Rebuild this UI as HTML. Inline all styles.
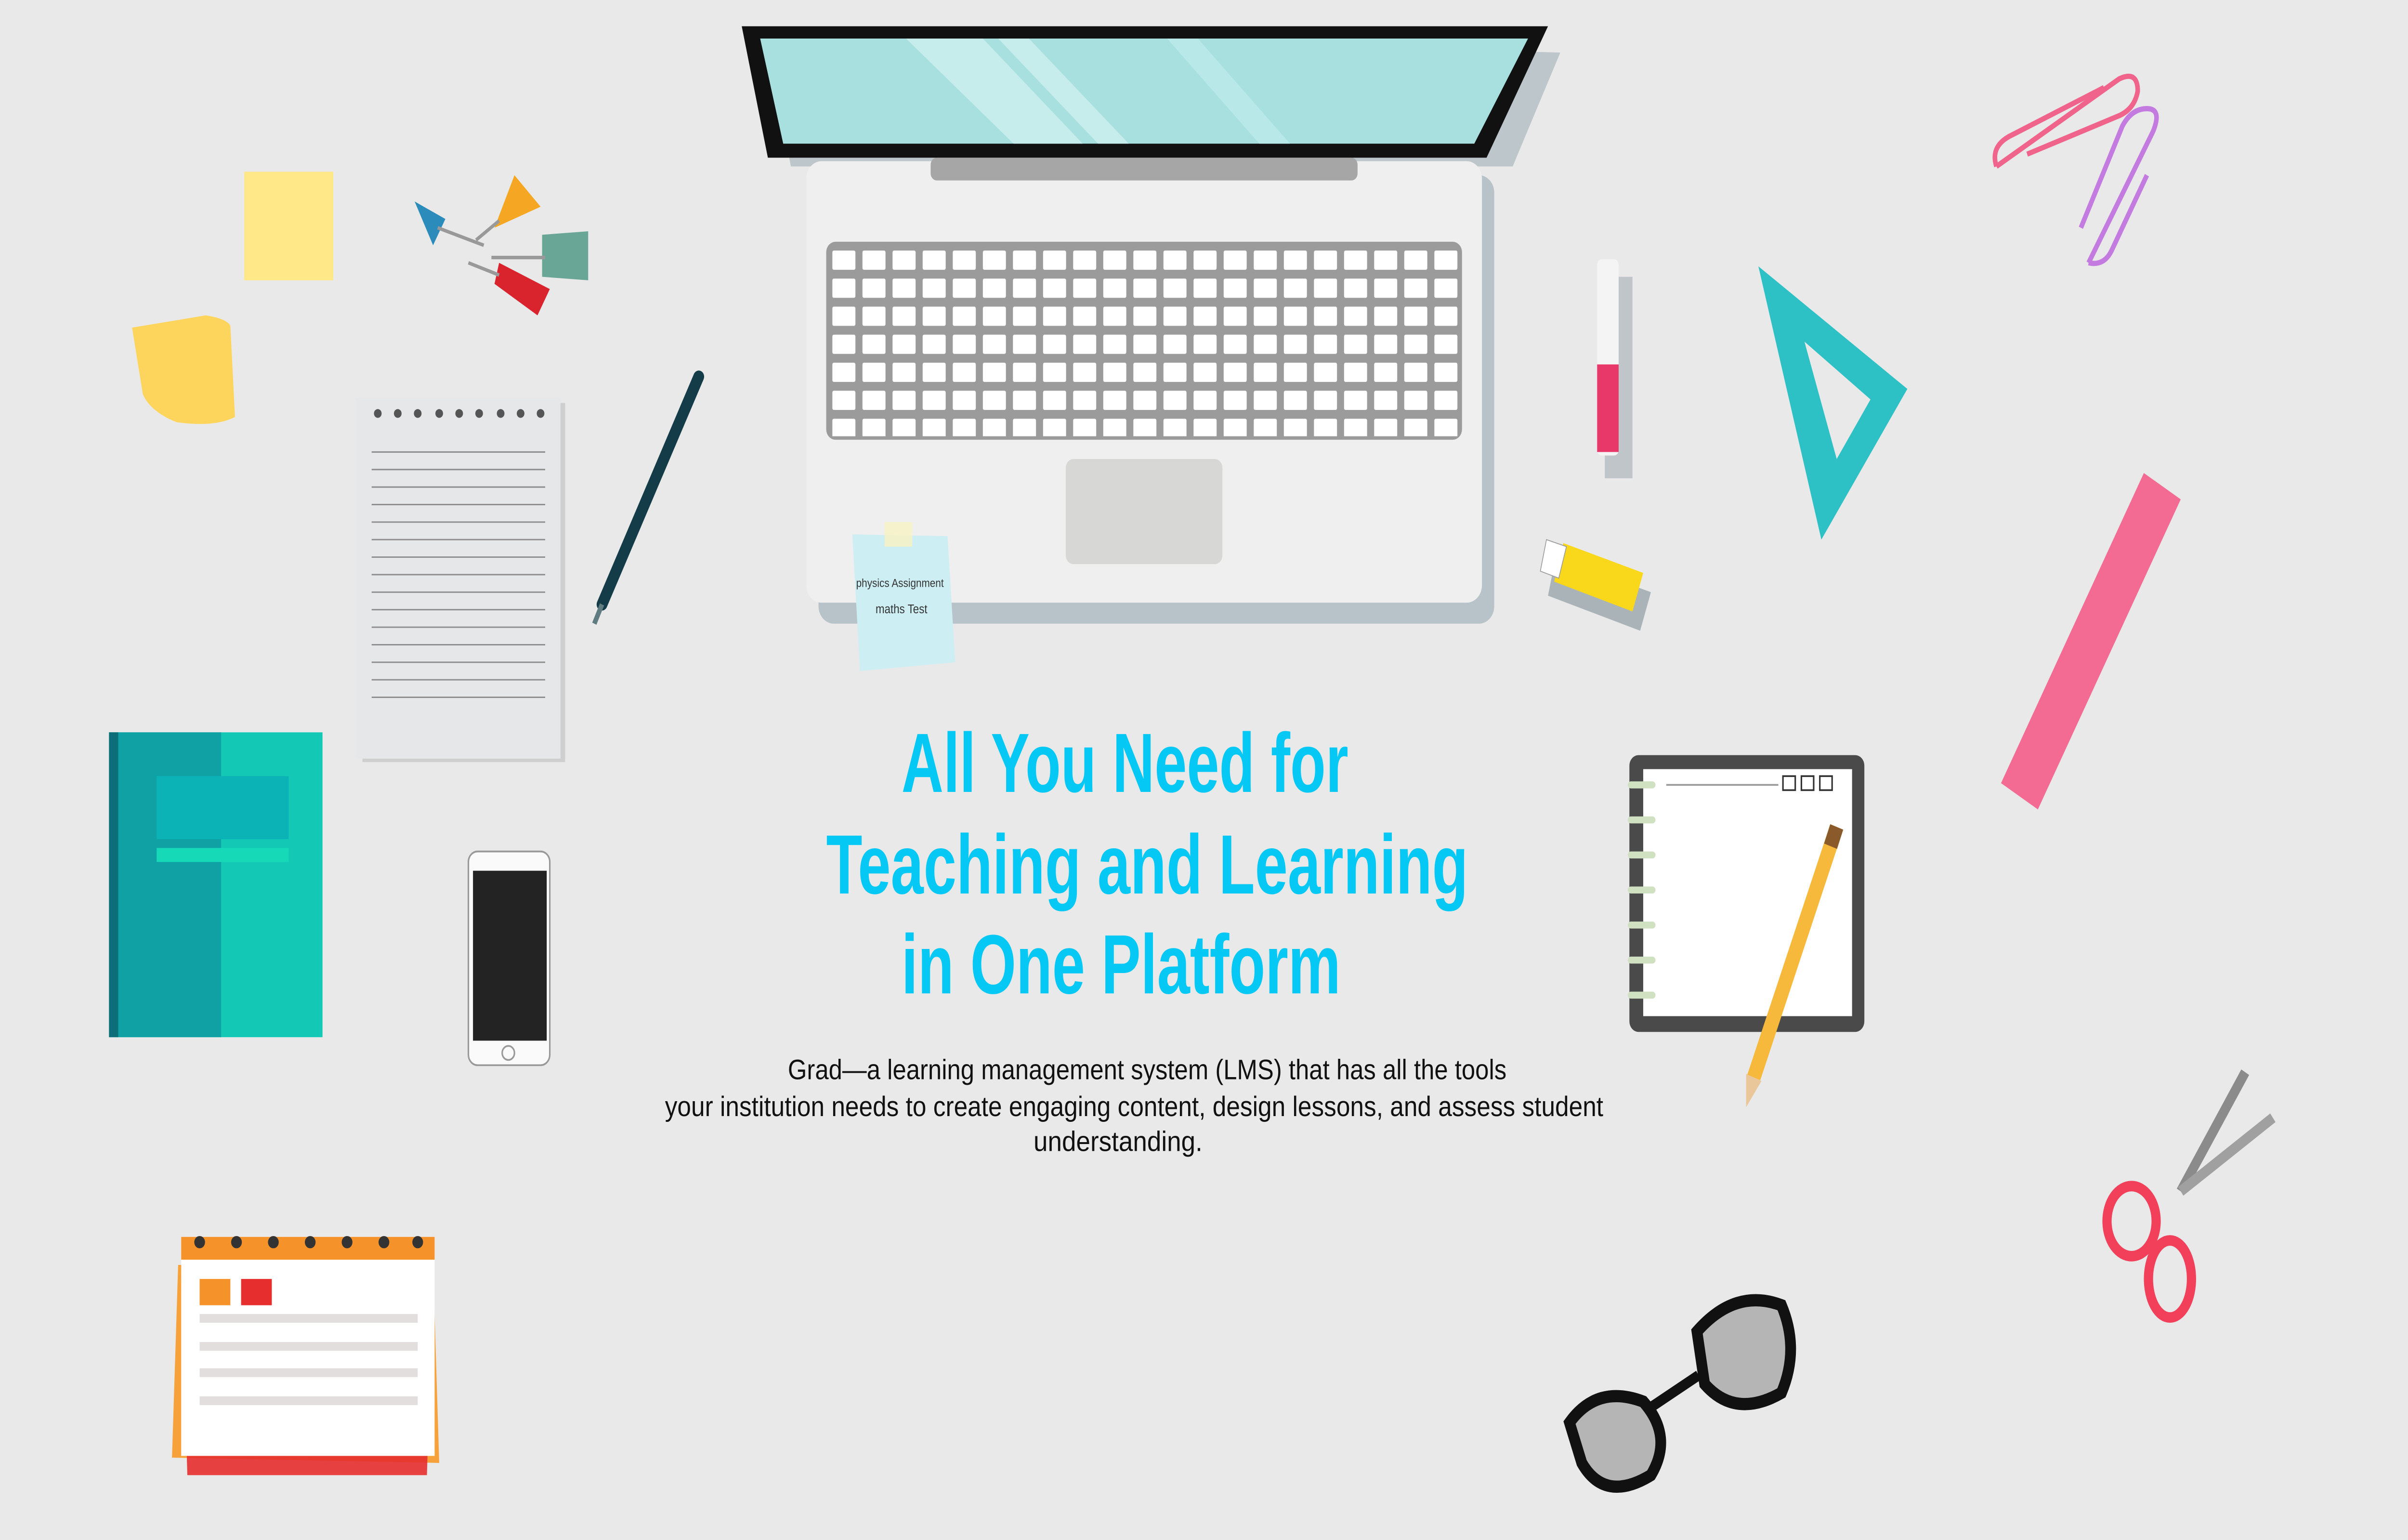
<!DOCTYPE html>
<html><head><meta charset="utf-8"><style>
html,body{margin:0;padding:0;background:#e9e9e9;width:100%;height:100%;overflow:hidden;}
svg{display:block;width:100vw;height:100vh;}
</style></head><body>
<svg viewBox="0 0 1568 879" preserveAspectRatio="none" xmlns="http://www.w3.org/2000/svg">
<defs>
<pattern id="keys" x="540" y="141" width="19.6" height="16" patternUnits="userSpaceOnUse">
<rect x="2" y="2" width="15" height="11" fill="#fff" rx="1"/>
</pattern>
</defs>
<rect width="1568" height="879" fill="#e9e9e9"/>

<!-- laptop -->
<path d="M498 18 L1016 30 L985 95 L515 95 Z" fill="#bcc6cb"/>
<path d="M483 15 L1008 15 L968 90 L500 90 Z" fill="#111"/>
<path d="M495 22 L995 22 L960 82 L510 82 Z" fill="#a8e0e0"/>
<path d="M590 22 L640 22 L705 82 L660 82 Z" fill="#c6ecec"/>
<path d="M650 22 L670 22 L735 82 L715 82 Z" fill="#c6ecec"/>
<path d="M760 22 L780 22 L840 82 L820 82 Z" fill="#b8e8e8"/>
<rect x="533" y="100" width="440" height="256" rx="10" fill="#b7c3c9"/>
<rect x="525" y="92" width="440" height="252" rx="10" fill="#efefef"/>
<rect x="606" y="90" width="278" height="13" rx="4" fill="#a6a6a6"/>
<rect x="538" y="138" width="414" height="113" rx="6" fill="#9b9b9b"/>
<rect x="540" y="141" width="410" height="108" fill="url(#keys)"/>
<rect x="694" y="262" width="102" height="60" rx="5" fill="#d7d7d5"/>
<path d="M555 305 L617 306 L622 378 L560 383 Z" fill="#cdeef3"/>
<rect x="576" y="298" width="18" height="14" fill="#f5f2c8" opacity="0.9"/>
<text x="586" y="335" font-family="Liberation Sans Narrow, Liberation Sans, sans-serif" font-size="6.5" text-anchor="middle" fill="#333">physics Assignment</text>
<text x="587" y="350" font-family="Liberation Sans Narrow, Liberation Sans, sans-serif" font-size="7" text-anchor="middle" fill="#333">maths Test</text>

<!-- sticky notes -->
<rect x="159" y="98" width="58" height="62" fill="#fee888"/>
<path d="M86 187 L134 180 Q148 182 150 186 L153 238 Q140 244 115 241 Q98 235 93 225 Z" fill="#fdd55c"/>
<!-- pushpins -->
<path d="M270 115 L290 125 L282 140 Z" fill="#2b8bbb"/><line x1="285" y1="130" x2="315" y2="140" stroke="#999" stroke-width="2"/>
<path d="M335 100 L352 118 L322 130 Z" fill="#f5a623"/><line x1="325" y1="126" x2="310" y2="137" stroke="#999" stroke-width="2"/>
<path d="M353 134 L383 132 L383 160 L353 158 Z" fill="#6aa695"/><line x1="320" y1="147" x2="355" y2="147" stroke="#999" stroke-width="2"/>
<path d="M325 150 L358 165 L350 180 L322 162 Z" fill="#d9232d"/><line x1="305" y1="150" x2="325" y2="157" stroke="#999" stroke-width="2"/>

<!-- notepad -->
<rect x="236" y="230" width="132" height="205" fill="#cfcfcf"/>
<rect x="232" y="227" width="133" height="206" fill="#e6e7e8"/>
<g stroke="#8d8d8d" stroke-width="0.8">
<line x1="242" y1="258" x2="355" y2="258"/><line x1="242" y1="268" x2="355" y2="268"/><line x1="242" y1="278" x2="355" y2="278"/><line x1="242" y1="288" x2="355" y2="288"/><line x1="242" y1="298" x2="355" y2="298"/><line x1="242" y1="308" x2="355" y2="308"/><line x1="242" y1="318" x2="355" y2="318"/><line x1="242" y1="328" x2="355" y2="328"/><line x1="242" y1="338" x2="355" y2="338"/><line x1="242" y1="348" x2="355" y2="348"/><line x1="242" y1="358" x2="355" y2="358"/><line x1="242" y1="368" x2="355" y2="368"/><line x1="242" y1="378" x2="355" y2="378"/><line x1="242" y1="388" x2="355" y2="388"/><line x1="242" y1="398" x2="355" y2="398"/>
</g>
<g fill="#555"><circle cx="246" cy="236" r="2.5"/><circle cx="259" cy="236" r="2.5"/><circle cx="272" cy="236" r="2.5"/><circle cx="286" cy="236" r="2.5"/><circle cx="299" cy="236" r="2.5"/><circle cx="312" cy="236" r="2.5"/><circle cx="326" cy="236" r="2.5"/><circle cx="339" cy="236" r="2.5"/><circle cx="352" cy="236" r="2.5"/></g>
<line x1="455" y1="215" x2="392" y2="345" stroke="#143c48" stroke-width="7" stroke-linecap="round"/>
<line x1="392" y1="345" x2="387" y2="356" stroke="#5f7d80" stroke-width="3"/>

<!-- teal notebook -->
<rect x="71" y="418" width="139" height="174" fill="#13c9b6"/>
<rect x="71" y="418" width="73" height="174" fill="#10a1a4"/>
<rect x="71" y="418" width="6" height="174" fill="#0b6e78"/>
<rect x="102" y="443" width="86" height="36" fill="#0cb3b6"/>
<rect x="102" y="484" width="86" height="8" fill="#16d9b8"/>
<!-- phone -->
<rect x="305" y="486" width="53" height="122" rx="6" fill="#fafafa" stroke="#999" stroke-width="1"/>
<rect x="308" y="497" width="48" height="97" fill="#232323"/>
<circle cx="331" cy="601" r="4" fill="none" stroke="#999"/>
<!-- calendar -->
<path d="M116 722 L282 722 L286 835 L112 832 Z" fill="#f6a13a"/>
<path d="M118 722 L282 722 L278 842 L122 842 Z" fill="#e62e2e" opacity="0.9"/>
<rect x="118" y="706" width="165" height="125" fill="#fff"/>
<rect x="118" y="706" width="165" height="13" fill="#f6922a"/>
<rect x="130" y="730" width="20" height="15" fill="#f6922a"/>
<rect x="157" y="730" width="20" height="15" fill="#e62e2e"/>
<g fill="#e3dede"><rect x="130" y="750" width="142" height="5"/><rect x="130" y="766" width="142" height="5"/><rect x="130" y="781" width="142" height="5"/><rect x="130" y="797" width="142" height="5"/></g>
<g fill="#333"><circle cx="130" cy="709" r="3.5"/><circle cx="154" cy="709" r="3.5"/><circle cx="178" cy="709" r="3.5"/><circle cx="202" cy="709" r="3.5"/><circle cx="226" cy="709" r="3.5"/><circle cx="250" cy="709" r="3.5"/><circle cx="272" cy="709" r="3.5"/></g>

<!-- marker -->
<rect x="1045" y="158" width="18" height="115" fill="#bfc5c9"/>
<rect x="1040" y="148" width="14" height="112" rx="3" fill="#f4f4f4"/>
<rect x="1040" y="208" width="14" height="50" fill="#e8386a"/>
<!-- usb -->
<path d="M1013 318 L1075 338 L1068 360 L1008 340 Z" fill="#a9b3b8"/>
<path d="M1018 310 L1070 327 L1063 349 L1012 332 Z" fill="#f9d81c"/>
<path d="M1007 308 L1020 312 L1015 330 L1003 326 Z" fill="#fff" stroke="#999" stroke-width="0.5"/>
<!-- triangle ruler -->
<path d="M1145 152 L1242 222 L1186 308 Z M1175 195 L1196 262 L1218 228 Z" fill="#2dc1c6" fill-rule="evenodd"/>
<!-- paperclips -->
<path d="M1300 95 L1380 45 Q1392 40 1392 52 Q1390 62 1380 66 L1320 88" fill="none" stroke="#f0648c" stroke-width="3"/>
<path d="M1300 95 Q1296 84 1308 78 L1370 50" fill="none" stroke="#f0648c" stroke-width="3"/>
<path d="M1360 150 L1402 75 Q1408 62 1398 62 Q1388 62 1382 72 L1355 130" fill="none" stroke="#c47be0" stroke-width="3"/>
<path d="M1360 150 Q1370 152 1375 143 L1398 100" fill="none" stroke="#c47be0" stroke-width="3"/>
<!-- pink ruler -->
<path d="M1396 270 L1420 285 L1327 462 L1303 447 Z" fill="#f36b93"/>
<!-- right notebook -->
<rect x="1061" y="431" width="153" height="158" rx="6" fill="#4a4a4a"/>
<rect x="1070" y="439" width="136" height="141" fill="#fff"/>
<line x1="1085" y1="448" x2="1158" y2="448" stroke="#999" stroke-width="1"/>
<rect x="1161" y="443" width="8" height="8" fill="none" stroke="#333"/><rect x="1173" y="443" width="8" height="8" fill="none" stroke="#333"/><rect x="1185" y="443" width="8" height="8" fill="none" stroke="#333"/>
<g fill="#cfe1c0"><rect x="1060" y="446" width="18" height="4" rx="2"/><rect x="1060" y="466" width="18" height="4" rx="2"/><rect x="1060" y="486" width="18" height="4" rx="2"/><rect x="1060" y="506" width="18" height="4" rx="2"/><rect x="1060" y="526" width="18" height="4" rx="2"/><rect x="1060" y="546" width="18" height="4" rx="2"/><rect x="1060" y="566" width="18" height="4" rx="2"/></g>
<!-- pencil -->
<line x1="1196" y1="472" x2="1142" y2="615" stroke="#f6b93b" stroke-width="9"/>
<line x1="1196" y1="472" x2="1192" y2="483" stroke="#8a5a2a" stroke-width="9"/>
<path d="M1137 613 L1147 617 L1137 632 Z" fill="#e9c79a"/>
<!-- scissors -->
<line x1="1462" y1="612" x2="1420" y2="680" stroke="#8b8b8b" stroke-width="6"/>
<line x1="1480" y1="638" x2="1420" y2="680" stroke="#a0a0a0" stroke-width="6"/>
<ellipse cx="1388" cy="697" rx="16" ry="20" fill="none" stroke="#f23f5a" stroke-width="6"/>
<ellipse cx="1413" cy="730" rx="14" ry="22" fill="none" stroke="#f23f5a" stroke-width="6"/>
<!-- glasses -->
<path d="M1022 812 Q1040 790 1070 800 Q1090 820 1075 842 Q1045 858 1030 835 Z" fill="#b5b5b5" stroke="#111" stroke-width="7"/>
<path d="M1105 760 Q1130 735 1160 745 Q1172 770 1160 795 Q1130 810 1110 790 Z" fill="#b5b5b5" stroke="#111" stroke-width="7"/>
<line x1="1072" y1="805" x2="1106" y2="785" stroke="#111" stroke-width="6"/>

<!-- text -->
<g font-family="Liberation Sans Narrow, Liberation Sans, sans-serif" font-weight="bold" fill="#05c8f5" font-size="48">
<text x="587" y="452" textLength="291" lengthAdjust="spacingAndGlyphs">All You Need for</text>
<text x="538" y="510" textLength="418" lengthAdjust="spacingAndGlyphs">Teaching and Learning</text>
<text x="587" y="567" textLength="286" lengthAdjust="spacingAndGlyphs">in One Platform</text>
</g>
<g font-family="Liberation Sans Narrow, Liberation Sans, sans-serif" fill="#111" font-size="16">
<text x="513" y="616" textLength="468" lengthAdjust="spacingAndGlyphs">Grad—a learning management system (LMS) that has all the tools</text>
<text x="433" y="637" textLength="611" lengthAdjust="spacingAndGlyphs">your institution needs  to create engaging content, design lessons, and assess student</text>
<text x="673" y="657" textLength="110" lengthAdjust="spacingAndGlyphs">understanding.</text>
</g>
</svg>
</body></html>
